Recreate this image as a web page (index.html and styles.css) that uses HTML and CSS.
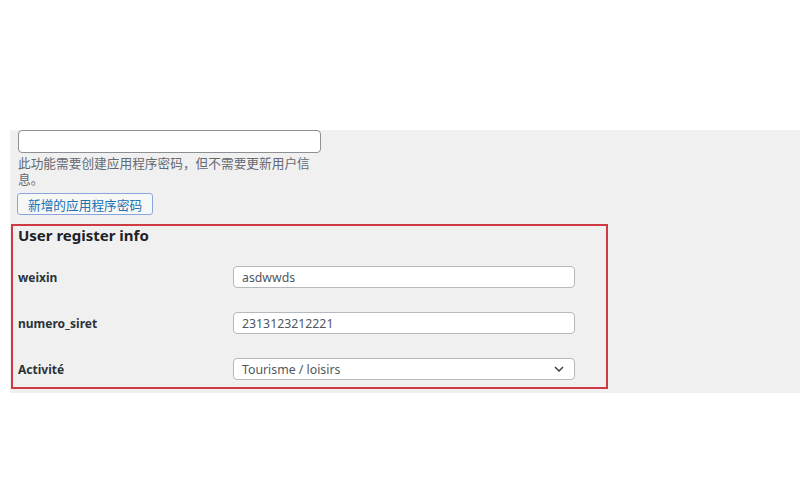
FILE: index.html
```html
<!DOCTYPE html>
<html lang="zh">
<head>
  <meta charset="UTF-8">
  <meta name="viewport" content="width=device-width, initial-scale=1.0">
  <title>User register info</title>
  <link rel="stylesheet" href="styles.css">
</head>
<body>
  <div class="page">
    <div class="panel">
      <input type="text" class="app-name">
      <p class="hint">此功能需要创建应用程序密码，但不需要更新用户信息。</p>
      <button class="btn-secondary">新增的应用程序密码</button>

      <div class="register-box">
        <h3>User register info</h3>
        <div class="fields">
          <label for="weixin">weixin</label>
          <input type="text" id="weixin" value="asdwwds">

          <label for="siret">numero_siret</label>
          <input type="text" id="siret" value="2313123212221">

          <label for="activite">Activité</label>
          <div class="select">
            <span>Tourisme / loisirs</span>
            <svg width="10" height="6" viewBox="0 0 10 6"><path d="M1 1l4 4 4-4" fill="none" stroke="#3c434a" stroke-width="1.5"/></svg>
          </div>
        </div>
      </div>
    </div>
  </div>
</body>
</html>
```

FILE: styles.css
```css
body {
  margin: 0;
  background-color: #fff;
  font-family: "Noto Sans", "Noto Sans CJK SC", sans-serif;
  color: #1d2327;
}
.page {
  padding-top: 130px;
}
.panel {
  margin-left: 10px;
  height: 263px;
  background-color: #f0f0f1;
  padding-left: 1px;
  box-sizing: border-box;
}
.app-name {
  display: block;
  margin: 0 0 0 7px;
  width: 303px;
  height: 23px;
  box-sizing: border-box;
  border: 1px solid #8c8f94;
  border-radius: 4px;
  background-color: #fff;
}
.hint {
  margin: 2px 0 0 7px;
  width: 300px;
  font-size: 12.7px;
  line-height: 16px;
  color: #646970;
}
.btn-secondary {
  display: block;
  margin: 6px 0 0 6px;
  height: 22px;
  padding: 0 10px;
  font-family: "Noto Sans CJK SC", sans-serif;
  font-size: 12.7px;
  color: #2271b1;
  background-color: #f6f7f7;
  border: 1px solid #8aa5dc;
  border-radius: 3px;
}
.register-box {
  margin-top: 9px;
  width: 597px;
  height: 165px;
  box-sizing: border-box;
  border: 2px solid #cf3b45;
  padding: 0 0 0 5px;
}
.register-box h3 {
  margin: 0;
  font-size: 15px;
  line-height: 19px;
  font-weight: bold;
  color: #1d2327;
}
.fields {
  display: grid;
  grid-template-columns: 215px 342px;
  row-gap: 24px;
  align-items: center;
  margin-top: 21px;
}
.fields label {
  font-size: 12px;
  font-weight: bold;
  color: #2c3338;
}
.fields input, .select {
  height: 22px;
  box-sizing: border-box;
  border: 1px solid #b5b8bd;
  border-radius: 4px;
  background-color: #fff;
  padding: 0 8px;
  font-family: "Noto Sans", sans-serif;
  font-size: 12.3px;
  color: #50575e;
}
.select {
  display: flex;
  align-items: center;
  justify-content: space-between;
}
.select svg {
  margin-right: 2px;
}
```
